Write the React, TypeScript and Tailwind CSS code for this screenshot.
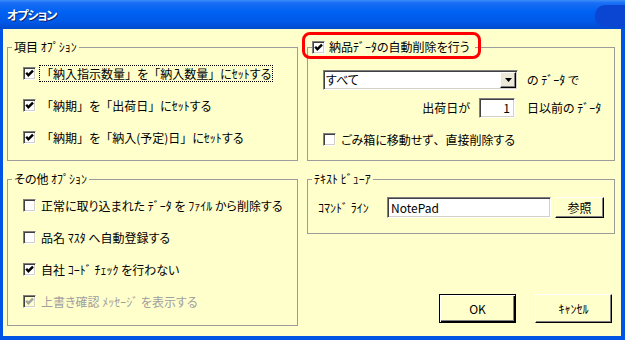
import React from 'react';

const sunken =
  'border border-t-[#808080] border-l-[#808080] border-b-white border-r-white shadow-[inset_1px_1px_0_#404040,inset_-1px_-1px_0_#d4d0c8]';
const raised =
  'border border-t-white border-l-white border-b-black border-r-black shadow-[inset_-1px_-1px_0_#808080]';

// full-width punctuation keeps its em box (palt would squeeze it)
function P({ children }: { children: React.ReactNode }) {
  return <span className="[font-feature-settings:normal]">{children}</span>;
}

function CheckBox({ checked, disabled }: { checked?: boolean; disabled?: boolean }) {
  return (
    <span
      className={`w-[13px] h-[13px] shrink-0 flex items-center justify-center ${sunken} ${
        disabled ? 'bg-[#ffffcc]' : 'bg-white'
      }`}
    >
      {checked && (
        <svg width="9" height="9" viewBox="0 0 9 9">
          <path
            d="M1.2 3.8 L3.4 6.2 L8 1.6"
            fill="none"
            stroke={disabled ? '#a0a0a0' : '#000'}
            strokeWidth="2.4"
          />
        </svg>
      )}
    </span>
  );
}

function CheckRow({
  checked,
  disabled,
  focused,
  children,
}: {
  checked?: boolean;
  disabled?: boolean;
  focused?: boolean;
  children: React.ReactNode;
}) {
  return (
    <label className="flex items-center h-[20px] gap-[3px]">
      <CheckBox checked={checked} disabled={disabled} />
      <span
        className={`px-[1px] leading-[15px] border border-dotted whitespace-nowrap ${
          focused ? 'border-black' : 'border-transparent'
        } ${disabled ? 'text-[#a0a0a0]' : ''}`}
      >
        {children}
      </span>
    </label>
  );
}

function Group({
  legend,
  className,
  children,
}: {
  legend: React.ReactNode;
  className?: string;
  children: React.ReactNode;
}) {
  return (
    <fieldset className={`border border-[#9c9c9c] ${className ?? ''}`}>
      <legend className="ml-[4px] px-[2px] leading-[14px] whitespace-nowrap">{legend}</legend>
      {children}
    </fieldset>
  );
}

export default function App() {
  return (
    <div className="w-[625px] h-[340px] bg-[#0054e3] flex flex-col overflow-hidden text-[12px] leading-[14px] text-black font-['Noto_Sans_CJK_JP',sans-serif] [font-feature-settings:'palt']">
      {/* Title bar */}
      <div className="h-[29px] shrink-0 flex items-center bg-[linear-gradient(to_bottom,#3d8ef8_0%,#1a6ef5_10%,#0061f2_40%,#0058e8_75%,#0049cc_100%)]">
        <span className="ml-[7px] text-white font-bold text-[12px] tracking-[-1px] [text-shadow:1px_1px_0_#0a246a]">
          オプション
        </span>
        <div className="ml-auto self-stretch mt-[5px] mb-[2px] w-[30px] rounded-l-[10px] bg-[#0b46d2]" />
      </div>

      {/* Client area */}
      <div className="flex-1 ml-[3px] mr-[4px] mb-[4px] bg-[#ffffcc] flex gap-[9px] pl-[4px] pt-[11px]">
        {/* Left column */}
        <div className="w-[291px] flex flex-col gap-[11px]">
          <Group legend="項目 ｵﾌﾟｼｮﾝ" className="h-[121px]">
            <div className="pl-[15px] pt-[9px] flex flex-col gap-[12px]">
              <CheckRow checked focused>
                <P>「</P>納入指示数量<P>」</P>を<P>「</P>納入数量<P>」</P>にｾｯﾄする
              </CheckRow>
              <CheckRow checked>
                <P>「</P>納期<P>」</P>を<P>「</P>出荷日<P>」</P>にｾｯﾄする
              </CheckRow>
              <CheckRow checked>
                <P>「</P>納期<P>」</P>を<P>「</P>納入(予定)日<P>」</P>にｾｯﾄする
              </CheckRow>
            </div>
          </Group>

          <Group legend="その他 ｵﾌﾟｼｮﾝ" className="h-[154px]">
            <div className="pl-[15px] pt-[9px] flex flex-col gap-[12px]">
              <CheckRow>正常に取り込まれた ﾃﾞｰﾀ を ﾌｧｲﾙ から削除する</CheckRow>
              <CheckRow>品名 ﾏｽﾀ へ自動登録する</CheckRow>
              <CheckRow checked>自社 ｺｰﾄﾞ ﾁｪｯｸ を行わない</CheckRow>
              <CheckRow checked disabled>
                上書き確認 ﾒｯｾｰｼﾞ を表示する
              </CheckRow>
            </div>
          </Group>
        </div>

        {/* Right column */}
        <div className="w-[308px] flex flex-col">
          <fieldset className="h-[121px] border border-[#9c9c9c]">
            <legend className="relative ml-[4px] pr-[5px] leading-[14px] whitespace-nowrap">
              <span className="flex items-center gap-[4px]">
                <CheckBox checked />
                <span>納品ﾃﾞｰﾀの自動削除を行う</span>
              </span>
              {/* red annotation */}
              <span className="absolute left-[-10px] top-[-8px] w-[179px] h-[27px] border-[3px] border-[#ff0000] rounded-[8px] pointer-events-none" />
            </legend>

            <div className="pl-[15px] pt-[16px] grid grid-cols-[195px_auto] gap-x-[9px] items-center">
              <div className={`h-[20px] flex items-center bg-white ${sunken}`}>
                <span className="flex-1 pl-[2px]">すべて</span>
                <span
                  className={`w-[16px] h-[16px] mr-[1px] flex items-center justify-center bg-[#ece9d8] ${raised}`}
                >
                  <svg width="7" height="4" viewBox="0 0 7 4">
                    <path d="M0 0 H7 L3.5 4 Z" fill="#000" />
                  </svg>
                </span>
              </div>
              <span className="whitespace-nowrap">の ﾃﾞｰﾀ で</span>

              <div className="mt-[8px] flex items-center justify-end gap-[9px] pr-[3px]">
                <span>出荷日が</span>
                <span className={`w-[36px] h-[20px] flex items-center justify-end pr-[4px] bg-white ${sunken}`}>
                  1
                </span>
              </div>
              <span className="mt-[8px] whitespace-nowrap">日以前の ﾃﾞｰﾀ</span>

              <div className="col-span-2 mt-[11px]">
                <CheckRow>
                  ごみ箱に移動せず<P>、</P>直接削除する
                </CheckRow>
              </div>
            </div>
          </fieldset>

          <Group legend="ﾃｷｽﾄ ﾋﾞｭｰｱ" className="mt-[11px] h-[62px]">
            <div className="pl-[10px] pt-[11px] flex items-center">
              <span className="w-[69px] shrink-0 whitespace-nowrap">ｺﾏﾝﾄﾞ ﾗｲﾝ</span>
              <span className={`w-[164px] h-[21px] flex items-center pl-[3px] bg-white ${sunken}`}>
                NotePad
              </span>
              <button className={`ml-[4px] w-[49px] h-[21px] bg-[#ffffcc] ${raised}`}>参照</button>
            </div>
          </Group>

          <div className="mt-auto mb-[13px] pr-[3px] flex justify-end gap-[19px]">
            <button className="w-[77px] h-[29px] bg-[#ffffcc] border border-black shadow-[inset_1px_1px_0_#fff,inset_-1px_-1px_0_#000,inset_-2px_-2px_0_#808080]">
              OK
            </button>
            <button className={`w-[77px] h-[29px] bg-[#ffffcc] ${raised}`}>ｷｬﾝｾﾙ</button>
          </div>
        </div>
      </div>
    </div>
  );
}
